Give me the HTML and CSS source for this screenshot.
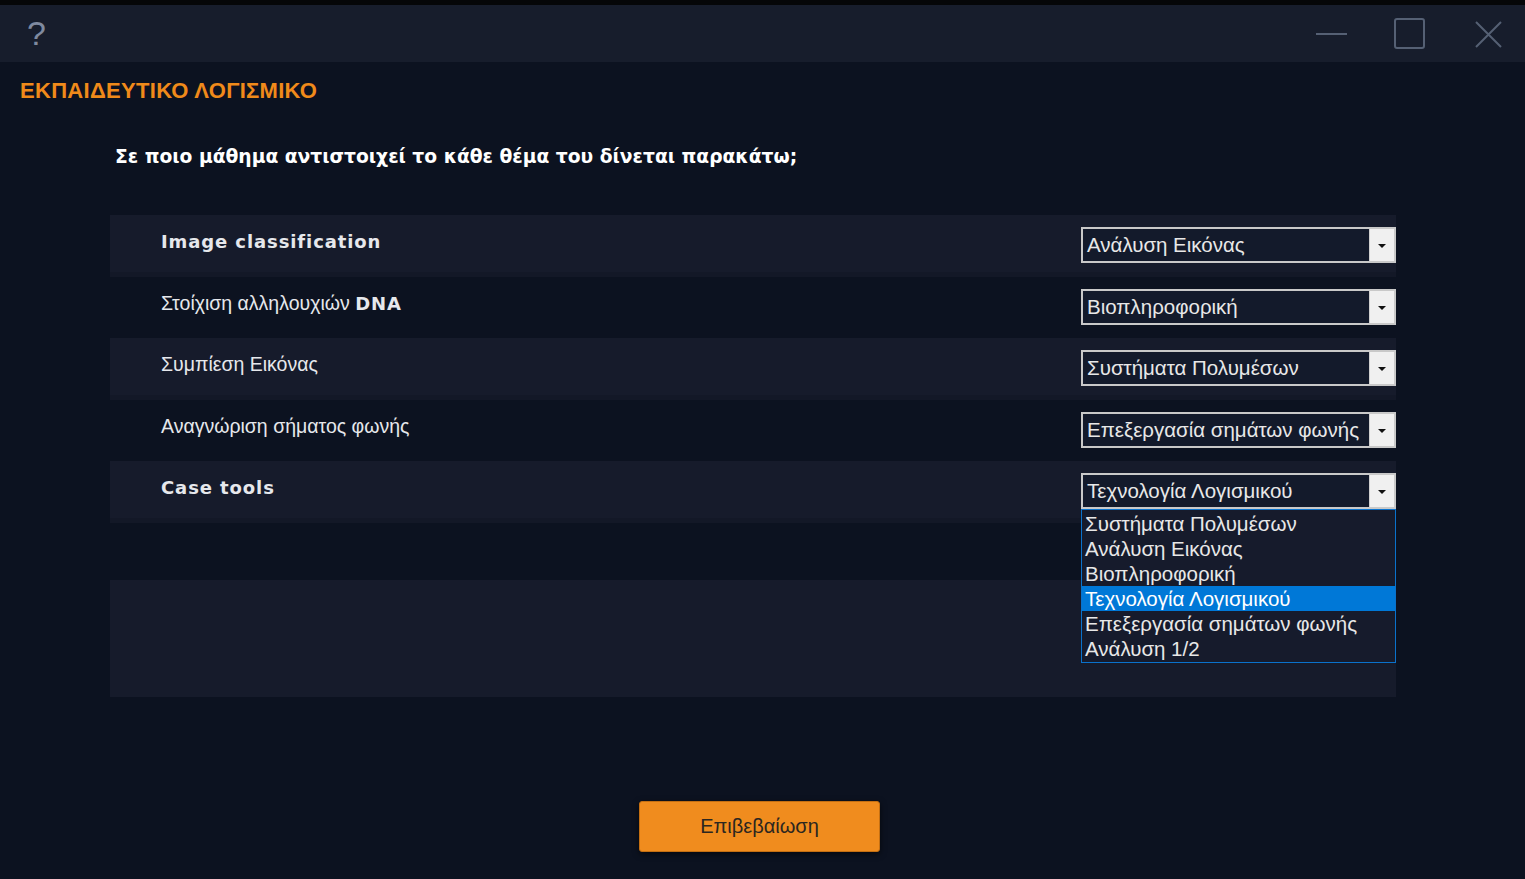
FILE: index.html
```html
<!DOCTYPE html>
<html lang="el">
<head>
<meta charset="utf-8">
<title>Εκπαιδευτικό λογισμικό</title>
<link rel="stylesheet" href="styles.css">
</head>
<body>
<div class="topstrip"></div>
<header class="titlebar">
  <span class="help">?</span>
  <div class="wincontrols">
    <svg class="wc" width="34" height="34" viewBox="0 0 34 34"><line x1="2" y1="17" x2="33" y2="17" stroke="#556074" stroke-width="2"/></svg>
    <svg class="wc" width="34" height="34" viewBox="0 0 34 34"><rect x="2" y="2" width="29" height="29" rx="2" fill="none" stroke="#556074" stroke-width="2"/></svg>
    <svg class="wc" width="34" height="34" viewBox="0 0 34 34"><path d="M4 5 L29 30 M29 5 L4 30" stroke="#556074" stroke-width="2" fill="none"/></svg>
  </div>
</header>
<main class="content">
  <h1 class="apptitle">ΕΚΠΑΙΔΕΥΤΙΚΟ ΛΟΓΙΣΜΙΚΟ</h1>
  <p class="question">Σε ποιο μάθημα αντιστοιχεί το κάθε θέμα του δίνεται παρακάτω;</p>
  <section class="panel">
    <div class="row light">
      <span class="label bold">Image classification</span>
      <div class="select"><span class="value">Ανάλυση Εικόνας</span><span class="arrow"></span></div>
    </div>
    <div class="row dark">
      <span class="label">Στοίχιση αλληλουχιών <b>DNA</b></span>
      <div class="select"><span class="value">Βιοπληροφορική</span><span class="arrow"></span></div>
    </div>
    <div class="row light">
      <span class="label">Συμπίεση Εικόνας</span>
      <div class="select"><span class="value">Συστήματα Πολυμέσων</span><span class="arrow"></span></div>
    </div>
    <div class="row dark">
      <span class="label">Αναγνώριση σήματος φωνής</span>
      <div class="select"><span class="value">Επεξεργασία σημάτων φωνής</span><span class="arrow"></span></div>
    </div>
    <div class="row light">
      <span class="label bold">Case tools</span>
      <div class="select open"><span class="value">Τεχνολογία Λογισμικού</span><span class="arrow"></span>
        <ul class="options">
          <li>Συστήματα Πολυμέσων</li>
          <li>Ανάλυση Εικόνας</li>
          <li>Βιοπληροφορική</li>
          <li class="selected">Τεχνολογία Λογισμικού</li>
          <li>Επεξεργασία σημάτων φωνής</li>
          <li>Ανάλυση 1/2</li>
        </ul>
      </div>
    </div>
    <div class="spacer"></div>
    <div class="block"></div>
  </section>
  <div class="actions">
    <button class="confirm">Επιβεβαίωση</button>
  </div>
</main>
</body>
</html>
```
FILE: styles.css
```css
html, body {
  margin: 0;
  padding: 0;
}
body {
  width: 1525px;
  height: 879px;
  overflow: hidden;
  background: #0c1220;
  font-family: "Liberation Sans", Arial, sans-serif;
  color: #e6e8ec;
}
.topstrip {
  height: 5px;
  background: #050608;
}
.titlebar {
  height: 57px;
  background: #171d2c;
  display: flex;
  align-items: center;
  justify-content: space-between;
  padding: 0 19px 0 27px;
}
.help {
  font-family: "Liberation Sans", sans-serif;
  font-size: 34px;
  color: #7f8aa0;
  margin-top: -1px;
}
.wincontrols {
  display: flex;
  gap: 45px;
  align-items: center;
}
.content {
  padding-top: 17px;
}
.apptitle {
  margin: 0 0 0 20px;
  font-size: 22px;
  line-height: 24px;
  font-weight: bold;
  color: #f08a1a;
  letter-spacing: 0.3px;
}
.question {
  margin: 42px 0 0 115px;
  font-family: "DejaVu Sans", sans-serif;
  font-size: 18.7px;
  line-height: 24px;
  font-weight: bold;
  color: #ffffff;
}
.panel {
  margin: 46px 0 0 110px;
  width: 1286px;
  display: flex;
  flex-direction: column;
}
.row {
  height: 61.5px;
  display: flex;
  align-items: center;
  justify-content: space-between;
  padding-left: 51px;
  box-sizing: border-box;
  position: relative;
}
.row.light {
  background: #161b2b;
  box-shadow: inset 0 -5px 0 #131827;
}
.row.dark {
  background: #0c1220;
}
.label {
  font-size: 19.5px;
  color: #e6e8ec;
  margin-top: -8px;
}
.label.bold, .label b {
  font-family: "DejaVu Sans", sans-serif;
  font-size: 18px;
  letter-spacing: 0.9px;
  font-weight: bold;
}
.select {
  position: relative;
  width: 315px;
  height: 36px;
  box-sizing: border-box;
  border: 2px solid #c9c9c9;
  background: #131a2b;
  display: flex;
  align-items: center;
  margin-top: -1px;
}
.value {
  flex: 1;
  padding-left: 4px;
  font-family: "Liberation Sans", Arial, sans-serif;
  font-size: 20.5px;
  color: #e8e8e8;
  white-space: nowrap;
}
.arrow {
  width: 24px;
  align-self: stretch;
  background: #f0f0f0;
  border-left: 1px solid #d0d0d0;
  position: relative;
}
.arrow::after {
  content: "";
  position: absolute;
  left: 8px;
  top: 15px;
  border-left: 4px solid transparent;
  border-right: 4px solid transparent;
  border-top: 4px solid #111;
}
.options {
  position: absolute;
  left: -2px;
  top: 34px;
  width: 315px;
  box-sizing: border-box;
  margin: 0;
  padding: 1px 0;
  list-style: none;
  background: #161b2c;
  border: 1px solid #0a72cc;
  z-index: 5;
}
.options li {
  height: 25px;
  line-height: 25px;
  padding-left: 3px;
  font-size: 20.5px;
  color: #e8e8e8;
  white-space: nowrap;
}
.options li.selected {
  background: #0078d7;
  color: #ffffff;
}
.spacer {
  height: 57.5px;
}
.block {
  height: 117px;
  background: #161b2b;
}
.actions {
  display: flex;
  justify-content: center;
  margin-top: 104px;
  padding-right: 6px;
}
.confirm {
  width: 241px;
  height: 51px;
  border: 1px solid #c46f12;
  border-radius: 3px;
  background: #f08c1e;
  color: #2b2620;
  font-family: "Liberation Sans", Arial, sans-serif;
  font-size: 20px;
  box-shadow: 0 2px 6px rgba(0,0,0,0.6);
}
```
